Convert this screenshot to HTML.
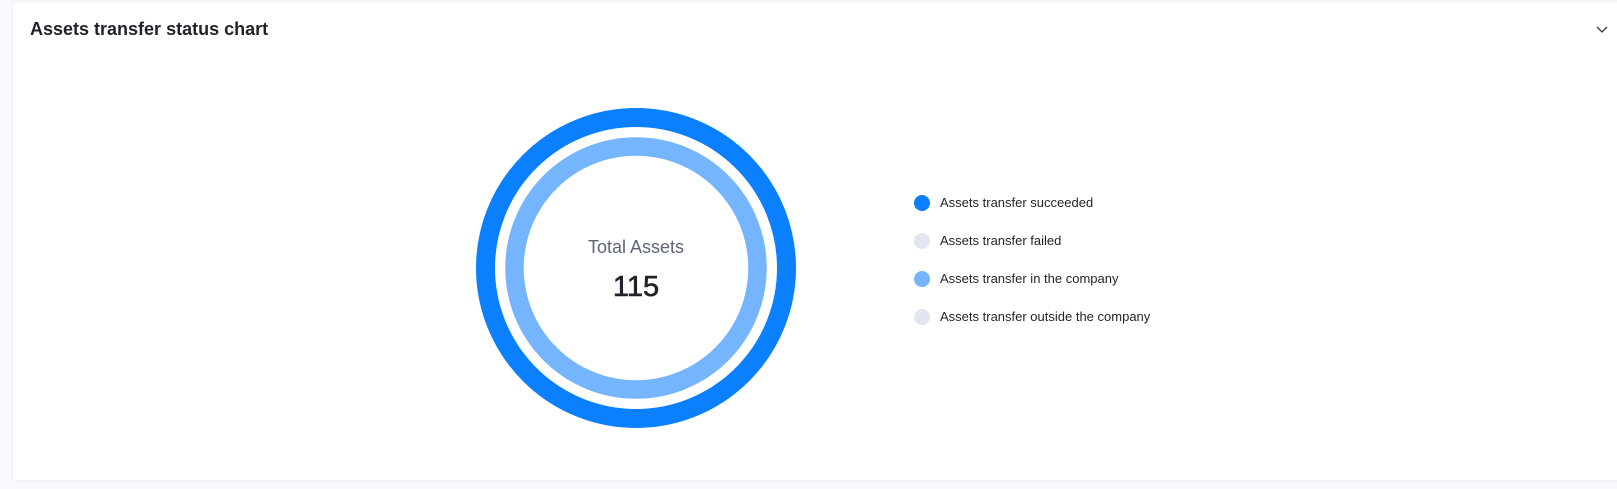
<!DOCTYPE html>
<html><head><meta charset="utf-8"><style>
html,body{margin:0;padding:0;width:1617px;height:489px;background:#f7f9fc;overflow:hidden;font-family:"Liberation Sans",sans-serif}
.panel{position:absolute;left:12px;top:1px;right:0;height:478px;background:#fff;border:1px solid #eef1f5;border-right:none}
.title{position:absolute;left:17px;top:17px;font-size:18px;font-weight:600;color:#1f2329}
.leg{position:absolute;left:940px;font-size:13px;color:#1f2329;line-height:16px}
.leg i{position:absolute;left:-26px;top:0;width:16px;height:16px;border-radius:50%}
</style></head><body>
<div class="panel">
<div class="title">Assets transfer status chart</div>
<svg style="position:absolute;left:1582px;top:23px" width="14" height="10" viewBox="0 0 14 10"><path d="M2 2 L7 7 L12 2" fill="none" stroke="#333" stroke-width="1.3"/></svg>
</div>
<svg style="position:absolute;left:0;top:0" width="1617" height="489">
<circle cx="636" cy="268" r="150.5" fill="none" stroke="#0a80ff" stroke-width="19"/>
<circle cx="636" cy="268" r="121.5" fill="none" stroke="#75b5ff" stroke-width="18.5"/>
<text x="636" y="253" text-anchor="middle" font-family="Liberation Sans, sans-serif" font-size="18" fill="#5d6675">Total Assets</text>
<text x="636" y="296" text-anchor="middle" font-family="Liberation Sans, sans-serif" font-size="29" fill="#1f2329" stroke="#1f2329" stroke-width="0.6">115</text>
</svg>
<div class="leg" style="top:195px"><i style="background:#0a80ff"></i>Assets transfer succeeded</div>
<div class="leg" style="top:233px"><i style="background:#e1e6ef"></i>Assets transfer failed</div>
<div class="leg" style="top:271px"><i style="background:#75b5ff"></i>Assets transfer in the company</div>
<div class="leg" style="top:309px"><i style="background:#e1e6ef"></i>Assets transfer outside the company</div>
</body></html>
